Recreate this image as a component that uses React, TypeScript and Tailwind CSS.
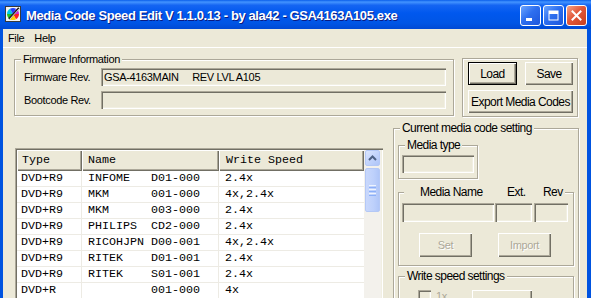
import React from "react";

type Row = { type: string; name: string; speed: string };

const rows: Row[] = [
  { type: "DVD+R9", name: "INFOME   D01-000", speed: "2.4x" },
  { type: "DVD+R9", name: "MKM      001-000", speed: "4x,2.4x" },
  { type: "DVD+R9", name: "MKM      003-000", speed: "2.4x" },
  { type: "DVD+R9", name: "PHILIPS  CD2-000", speed: "2.4x" },
  { type: "DVD+R9", name: "RICOHJPN D00-001", speed: "4x,2.4x" },
  { type: "DVD+R9", name: "RITEK    D01-001", speed: "2.4x" },
  { type: "DVD+R9", name: "RITEK    S01-001", speed: "2.4x" },
  { type: "DVD+R", name: "         001-000", speed: "4x" },
];

const UI = "font-['Liberation_Sans',Arial,sans-serif] text-[11px] tracking-[-0.35px]";
const NARROW = "font-['Liberation_Sans',Arial,sans-serif] text-[12px] tracking-[-0.55px]";
const MONO = "font-['Liberation_Mono','Courier_New',monospace] text-[11.67px]";

const sunken =
  "bg-[#ECE9D8] shadow-[inset_1px_1px_0_#ACA899,inset_2px_2px_0_#716F64,inset_-1px_-1px_0_#fff,inset_-2px_-2px_0_#F1EFE2]";
const raised =
  "bg-[#ECE9D8] shadow-[inset_1px_1px_0_#fff,inset_-1px_-1px_0_#716F64,inset_-2px_-2px_0_#ACA899]";
const group = "relative border border-[#ACA899] shadow-[inset_1px_1px_0_#fff,1px_1px_0_#fff]";

function Legend({ children, narrow }: { children: React.ReactNode; narrow?: boolean }) {
  return (
    <span
      className={`absolute left-[6px] top-[-8px] bg-[#ECE9D8] px-[2px] leading-[14px] whitespace-pre ${
        narrow ? NARROW : UI
      }`}
    >
      {children}
    </span>
  );
}

function AppIcon() {
  return (
    <svg width="16" height="16" viewBox="0 0 16 16" aria-hidden>
      <rect x="0.5" y="0.5" width="15" height="15" fill="#f4f4f4" stroke="#3a3a3a" />
      <path d="M8 8 L14 8 A6 6 0 0 1 11 13.2 Z" fill="#ff2020" />
      <path d="M8 8 L11 13.2 A6 6 0 0 1 5 13.2 Z" fill="#ffd400" />
      <path d="M8 8 L5 13.2 A6 6 0 0 1 2 8 Z" fill="#20c020" />
      <path d="M8 8 L2 8 A6 6 0 0 1 5 2.8 Z" fill="#00c8e8" />
      <path d="M8 8 L5 2.8 A6 6 0 0 1 11 2.8 Z" fill="#2040ff" />
      <path d="M8 8 L11 2.8 A6 6 0 0 1 14 8 Z" fill="#d020d0" />
      <path d="M4 13 L14 2" stroke="#222" strokeWidth="2" />
      <path d="M4.5 13.5 L14.5 2.5" stroke="#fff" strokeWidth="0.8" />
    </svg>
  );
}

function TitleBar() {
  return (
    <div className="flex h-[29px] shrink-0 items-center bg-[linear-gradient(to_bottom,#0A5EEA_0%,#4394FF_7%,#1565F2_18%,#0058EE_45%,#0055E5_80%,#0049D4_100%)] pl-[5px] pr-[4px] pt-[2px]">
      <div className="mb-[3px]">
        <AppIcon />
      </div>
      <span className="ml-[5px] flex-1 whitespace-pre font-['Liberation_Sans',Arial,sans-serif] text-[13px] font-bold tracking-[-0.38px] text-white [text-shadow:1px_1px_0_#0A1A80]">
        Media Code Speed Edit V 1.1.0.13 - by ala42 - GSA4163A105.exe
      </span>
      <div className="flex gap-[2px]">
        <div className="flex h-[21px] w-[21px] items-center justify-center rounded-[3px] border border-white bg-[linear-gradient(135deg,#6BA5FF_0%,#2E6FEF_45%,#1D56DC_100%)]">
          <svg width="13" height="13" viewBox="0 0 13 13" aria-hidden>
            <rect x="2" y="9" width="6" height="3" fill="#fff" />
          </svg>
        </div>
        <div className="flex h-[21px] w-[21px] items-center justify-center rounded-[3px] border border-white bg-[linear-gradient(135deg,#6BA5FF_0%,#2E6FEF_45%,#1D56DC_100%)]">
          <svg width="13" height="13" viewBox="0 0 13 13" aria-hidden>
            <rect x="2" y="2" width="9" height="9" fill="none" stroke="#fff" strokeWidth="1" />
            <rect x="2" y="2" width="9" height="3" fill="#fff" />
          </svg>
        </div>
        <div className="flex h-[21px] w-[21px] items-center justify-center rounded-[3px] border border-white bg-[linear-gradient(135deg,#F5A488_0%,#E2583A_45%,#C83F1E_100%)]">
          <svg width="13" height="13" viewBox="0 0 13 13" aria-hidden>
            <path d="M2.5 2.5 L10.5 10.5 M10.5 2.5 L2.5 10.5" stroke="#fff" strokeWidth="2" strokeLinecap="square" />
          </svg>
        </div>
      </div>
    </div>
  );
}

function Button({
  label,
  className,
  isDefault,
  disabled,
  narrow,
}: {
  label: string;
  className: string;
  isDefault?: boolean;
  disabled?: boolean;
  narrow?: boolean;
}) {
  return (
    <div className={`${className} ${isDefault ? "border border-black" : ""}`}>
      <div
        className={`flex h-full w-full items-center justify-center whitespace-pre ${raised} ${narrow ? NARROW : UI} ${
          disabled ? "text-[#ACA899] [text-shadow:1px_1px_0_#fff]" : "text-black"
        }`}
      >
        {label}
      </div>
    </div>
  );
}

function ScrollBar() {
  return (
    <div className="flex w-[17px] shrink-0 flex-col bg-[#F3F1EC] px-[1px]">
      <div className="flex h-[16px] items-center justify-center rounded-[2px] border border-[#B4C8F6] bg-[linear-gradient(135deg,#DCE6FD_0%,#C3D4FC_50%,#AFC5F8_100%)]">
        <svg width="9" height="6" viewBox="0 0 9 6" aria-hidden>
          <path d="M1 5 L4.5 1.5 L8 5" stroke="#4D6185" strokeWidth="2" fill="none" />
        </svg>
      </div>
      <div className="mt-[2px] flex h-[44px] flex-col items-center justify-center gap-[1px] rounded-[2px] border border-[#B4C8F6] bg-[linear-gradient(to_right,#C9D8FC_0%,#BDD0FB_60%,#B0C6F8_100%)]">
        <div className="h-[1px] w-[7px] bg-[#EEF4FE]" />
        <div className="h-[1px] w-[7px] bg-[#8CB0F8]" />
        <div className="h-[1px] w-[7px] bg-[#EEF4FE]" />
        <div className="h-[1px] w-[7px] bg-[#8CB0F8]" />
        <div className="h-[1px] w-[7px] bg-[#EEF4FE]" />
        <div className="h-[1px] w-[7px] bg-[#8CB0F8]" />
      </div>
    </div>
  );
}

function MediaList() {
  const head = `h-[21px] flex items-center ${raised}`;
  return (
    <div className={`mt-[20px] flex h-[170px] w-[368px] p-[2px] ${sunken}`}>
      <div className={`flex flex-1 flex-col bg-white ${MONO}`}>
        <div className="flex">
          <div className={`${head} w-[65px] pl-[5px]`}>Type</div>
          <div className={`${head} w-[137px] pl-[6px]`}>Name</div>
          <div className={`${head} flex-1 pl-[7px]`}>Write Speed</div>
        </div>
        {rows.map((r, i) => (
          <div key={i} className="flex h-[16px] items-center border-b border-[#EDEBE4] whitespace-pre">
            <div className="flex h-full w-[65px] items-center border-r border-[#EDEBE4] pl-[4px]">{r.type}</div>
            <div className="flex h-full w-[137px] items-center border-r border-[#EDEBE4] pl-[6px]">{r.name}</div>
            <div className="flex h-full flex-1 items-center pl-[6px]">{r.speed}</div>
          </div>
        ))}
      </div>
      <ScrollBar />
    </div>
  );
}

function MediaSettings() {
  return (
    <div className={`${group} ml-[10px] h-[180px] w-[186px] pl-[4px] pt-[16px]`}>
      <Legend narrow>Current media code setting</Legend>

      <div className={`${group} h-[34px] w-[80px] pl-[3px] pt-[9px]`}>
        <Legend narrow>Media type</Legend>
        <div className={`h-[18px] w-[72px] ${sunken}`} />
      </div>

      <div className={`${group} mt-[13px] h-[74px] w-[176px] pl-[3px] pt-[10px]`}>
        <span className={`absolute left-[5px] top-[-8px] flex whitespace-pre bg-[#ECE9D8] pr-[2px] leading-[14px] ${NARROW}`}>
          <span className="w-[103px] pl-[16px]">Media Name</span>
          <span className="w-[36px]">Ext.</span>
          <span>Rev</span>
        </span>
        <div className="flex">
          <div className={`h-[19px] w-[92px] ${sunken}`} />
          <div className={`ml-[1px] h-[19px] w-[37px] ${sunken}`} />
          <div className={`ml-[2px] h-[19px] w-[34px] ${sunken}`} />
        </div>
        <div className="mt-[11px] flex pl-[17px]">
          <Button label="Set" className="h-[24px] w-[53px]" disabled />
          <Button label="Import" className="ml-[26px] h-[24px] w-[53px]" disabled />
        </div>
      </div>

      <div className={`${group} mt-[10px] h-[60px] w-[176px] pl-[19px] pt-[13px]`}>
        <Legend narrow>Write speed settings</Legend>
        <div className="flex items-start">
          <div className={`h-[13px] w-[13px] ${sunken}`} />
          <span className={`ml-[5px] leading-[13px] text-[#ACA899] ${UI}`}>1x</span>
          <div className={`ml-[25px] h-[22px] w-[60px] ${raised}`} />
        </div>
      </div>
    </div>
  );
}

export default function App() {
  return (
    <div className="flex h-[298px] w-[591px] flex-col overflow-hidden bg-[#0053E0]">
      <TitleBar />
      <div className="ml-[3px] mr-[4px] flex flex-1 flex-col bg-[#ECE9D8] text-black">
        <div className={`flex h-[19px] shrink-0 items-center border-b border-white ${UI}`}>
          <span className="px-[5px]">File</span>
          <span className="px-[5px]">Help</span>
        </div>

        <div className="mt-[10px] ml-[11px] flex items-start">
          <div className={`${group} mt-[1px] h-[57px] w-[440px] pl-[9px] pt-[8px]`}>
            <Legend>Firmware Information</Legend>
            <div className="flex flex-col gap-[5px]">
              <div className="flex items-center">
                <span className={`w-[77px] ${UI}`}>Firmware Rev.</span>
                <div className={`flex h-[18px] w-[345px] items-center whitespace-pre pl-[3px] ${sunken} ${UI}`}>
                  GSA-4163MAIN     REV LVL A105
                </div>
              </div>
              <div className="flex items-center">
                <span className={`w-[77px] ${UI}`}>Bootcode Rev.</span>
                <div className={`h-[18px] w-[345px] ${sunken}`} />
              </div>
            </div>
          </div>

          <div className={`${group} ml-[8px] h-[59px] w-[116px] pl-[5px] pt-[3px]`}>
            <div className="flex">
              <Button label="Load" className="h-[23px] w-[49px]" isDefault narrow />
              <Button label="Save" className="ml-[8px] h-[23px] w-[48px]" narrow />
            </div>
            <Button label="Export Media Codes" className="mt-[5px] h-[23px] w-[105px]" narrow />
          </div>
        </div>

        <div className="mt-[11px] ml-[12px] flex items-start">
          <MediaList />
          <MediaSettings />
        </div>
      </div>
    </div>
  );
}
